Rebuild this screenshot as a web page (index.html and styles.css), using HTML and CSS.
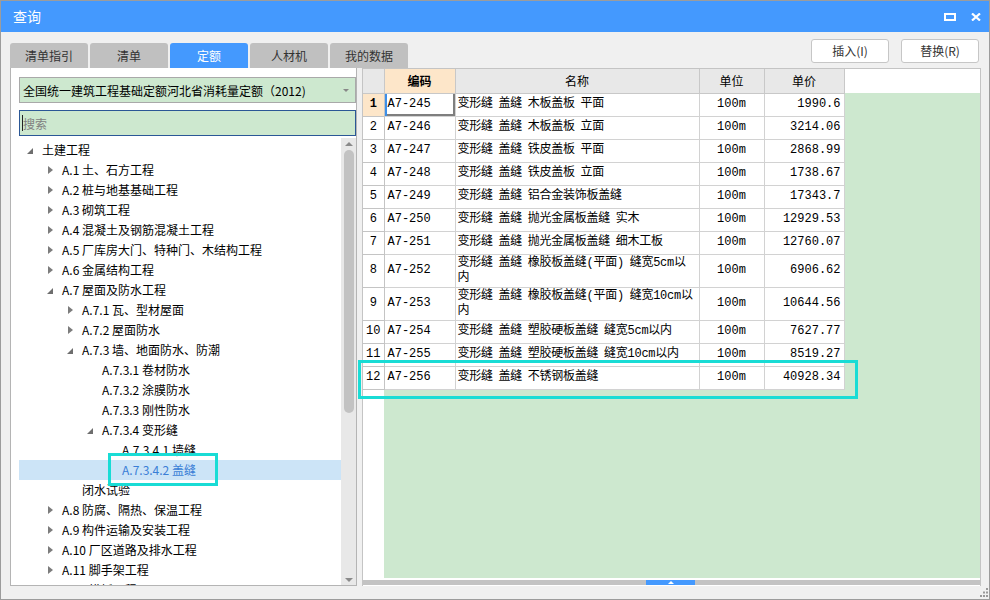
FILE: index.html
```html
<!DOCTYPE html>
<html lang="zh-CN">
<head>
<meta charset="utf-8">
<title>查询</title>
<link rel="stylesheet" href="styles.css">
</head>
<body>
<div class="window">
  <div class="titlebar">
    <span class="title">查询</span>
    <div class="win-ctrls">
      <svg class="ico-max" width="12" height="8" viewBox="0 0 12 8"><rect x="1" y="1" width="10" height="6" fill="none" stroke="#fff" stroke-width="2"/></svg>
      <svg class="ico-close" width="10" height="8" viewBox="0 0 10 8"><path d="M1 0.5 L9 7.5 M9 0.5 L1 7.5" stroke="#fff" stroke-width="2.2"/></svg>
    </div>
  </div>

  <div class="toolbar">
    <div class="tabs">
      <div class="tab">清单指引</div>
      <div class="tab">清单</div>
      <div class="tab active">定额</div>
      <div class="tab">人材机</div>
      <div class="tab">我的数据</div>
    </div>
    <div class="actions">
      <button class="btn">插入(I)</button>
      <button class="btn">替换(R)</button>
    </div>
  </div>

  <div class="main">
    <div class="left-panel">
      <div class="select">
        <span class="select-text">全国统一建筑工程基础定额河北省消耗量定额（2012)</span>
        <span class="select-arrow"></span>
      </div>
      <div class="search"><span class="caret"></span><span class="placeholder">搜索</span></div>
      <div class="tree-wrap">
        <ul class="tree">
          <li class="node l0"><span class="tw open"></span>土建工程</li>
          <li class="node l1"><span class="tw closed"></span>A.1 土、石方工程</li>
          <li class="node l1"><span class="tw closed"></span>A.2 桩与地基基础工程</li>
          <li class="node l1"><span class="tw closed"></span>A.3 砌筑工程</li>
          <li class="node l1"><span class="tw closed"></span>A.4 混凝土及钢筋混凝土工程</li>
          <li class="node l1"><span class="tw closed"></span>A.5 厂库房大门、特种门、木结构工程</li>
          <li class="node l1"><span class="tw closed"></span>A.6 金属结构工程</li>
          <li class="node l1"><span class="tw open"></span>A.7 屋面及防水工程</li>
          <li class="node l2"><span class="tw closed"></span>A.7.1 瓦、型材屋面</li>
          <li class="node l2"><span class="tw closed"></span>A.7.2 屋面防水</li>
          <li class="node l2"><span class="tw open"></span>A.7.3 墙、地面防水、防潮</li>
          <li class="node l3"><span class="tw"></span>A.7.3.1 卷材防水</li>
          <li class="node l3"><span class="tw"></span>A.7.3.2 涂膜防水</li>
          <li class="node l3"><span class="tw"></span>A.7.3.3 刚性防水</li>
          <li class="node l3"><span class="tw open"></span>A.7.3.4 变形缝</li>
          <li class="node l4"><span class="tw"></span>A.7.3.4.1 墙缝</li>
          <li class="node l4 selected"><span class="tw"></span>A.7.3.4.2 盖缝</li>
          <li class="node l2"><span class="tw"></span>闭水试验</li>
          <li class="node l1"><span class="tw closed"></span>A.8 防腐、隔热、保温工程</li>
          <li class="node l1"><span class="tw closed"></span>A.9 构件运输及安装工程</li>
          <li class="node l1"><span class="tw closed"></span>A.10 厂区道路及排水工程</li>
          <li class="node l1"><span class="tw closed"></span>A.11 脚手架工程</li>
          <li class="node l1"><span class="tw closed"></span>A.12 模板工程</li>
        </ul>
        <div class="vscroll">
          <span class="vs-up"></span>
          <div class="vs-thumb"></div>
          <span class="vs-down"></span>
        </div>
      </div>
    </div>

    <div class="grid-panel">
      <div class="grid-area">
        <table class="grid">
          <colgroup>
            <col class="c-rh"><col class="c-code"><col class="c-name"><col class="c-unit"><col class="c-price"><col>
          </colgroup>
          <thead>
            <tr>
              <th class="rh"></th>
              <th class="hcode">编码</th>
              <th>名称</th>
              <th>单位</th>
              <th>单价</th>
              <th class="filler"></th>
            </tr>
          </thead>
          <tbody>
            <tr><td class="rh cur">1</td><td class="code focus">A7-245</td><td class="name">变形缝 盖缝 木板盖板 平面</td><td class="unit">100m</td><td class="price">1990.6</td><td class="filler"></td></tr>
            <tr><td class="rh">2</td><td class="code">A7-246</td><td class="name">变形缝 盖缝 木板盖板 立面</td><td class="unit">100m</td><td class="price">3214.06</td><td class="filler"></td></tr>
            <tr><td class="rh">3</td><td class="code">A7-247</td><td class="name">变形缝 盖缝 铁皮盖板 平面</td><td class="unit">100m</td><td class="price">2868.99</td><td class="filler"></td></tr>
            <tr><td class="rh">4</td><td class="code">A7-248</td><td class="name">变形缝 盖缝 铁皮盖板 立面</td><td class="unit">100m</td><td class="price">1738.67</td><td class="filler"></td></tr>
            <tr><td class="rh">5</td><td class="code">A7-249</td><td class="name">变形缝 盖缝 铝合金装饰板盖缝</td><td class="unit">100m</td><td class="price">17343.7</td><td class="filler"></td></tr>
            <tr><td class="rh">6</td><td class="code">A7-250</td><td class="name">变形缝 盖缝 抛光金属板盖缝 实木</td><td class="unit">100m</td><td class="price">12929.53</td><td class="filler"></td></tr>
            <tr><td class="rh">7</td><td class="code">A7-251</td><td class="name">变形缝 盖缝 抛光金属板盖缝 细木工板</td><td class="unit">100m</td><td class="price">12760.07</td><td class="filler"></td></tr>
            <tr class="tall"><td class="rh">8</td><td class="code">A7-252</td><td class="name">变形缝 盖缝 橡胶板盖缝(平面) 缝宽5cm以<br>内</td><td class="unit">100m</td><td class="price">6906.62</td><td class="filler"></td></tr>
            <tr class="tall"><td class="rh">9</td><td class="code">A7-253</td><td class="name">变形缝 盖缝 橡胶板盖缝(平面) 缝宽10cm以<br>内</td><td class="unit">100m</td><td class="price">10644.56</td><td class="filler"></td></tr>
            <tr><td class="rh">10</td><td class="code">A7-254</td><td class="name">变形缝 盖缝 塑胶硬板盖缝 缝宽5cm以内</td><td class="unit">100m</td><td class="price">7627.77</td><td class="filler"></td></tr>
            <tr><td class="rh">11</td><td class="code">A7-255</td><td class="name">变形缝 盖缝 塑胶硬板盖缝 缝宽10cm以内</td><td class="unit">100m</td><td class="price">8519.27</td><td class="filler"></td></tr>
            <tr><td class="rh">12</td><td class="code">A7-256</td><td class="name">变形缝 盖缝 不锈钢板盖缝</td><td class="unit">100m</td><td class="price">40928.34</td><td class="filler"></td></tr>
          </tbody>
        </table>
      </div>
      <div class="hscroll"><div class="h-thumb"><span class="h-arrow"></span></div></div>
    </div>
  </div>

  <div class="statusbar">
    <svg class="grip" width="10" height="10" viewBox="0 0 10 10">
      <rect x="7" y="0" width="2" height="2" fill="#999"/>
      <rect x="4" y="3.5" width="2" height="2" fill="#999"/>
      <rect x="7" y="3.5" width="2" height="2" fill="#999"/>
      <rect x="1" y="7" width="2" height="2" fill="#999"/>
      <rect x="4" y="7" width="2" height="2" fill="#999"/>
      <rect x="7" y="7" width="2" height="2" fill="#999"/>
    </svg>
  </div>

  <div class="mark mark-tree"></div>
  <div class="mark mark-row"></div>
</div>
</body>
</html>
```

FILE: styles.css
```css
* { box-sizing: border-box; }

html, body {
  margin: 0;
  padding: 0;
  background: #f0f0f0;
}

body {
  font-family: "Noto Sans CJK SC", "Microsoft YaHei", sans-serif;
  font-size: 12px;
  color: #000;
}

.window {
  position: relative;
  width: 990px;
  height: 600px;
  border: 1px solid #9c9c9c;
  background: #f0f0f0;
  display: flex;
  flex-direction: column;
  overflow: hidden;
}

/* title bar */
.titlebar {
  height: 31px;
  flex: none;
  background: #4499fe;
  display: flex;
  align-items: center;
  padding: 0 8px 0 12px;
}

.title {
  color: #fff;
  font-size: 14px;
  line-height: 31px;
}

.win-ctrls {
  margin-left: auto;
  display: flex;
  align-items: center;
  gap: 15px;
  padding-top: 1px;
}

.win-ctrls svg { display: block; }

/* toolbar */
.toolbar {
  height: 36px;
  flex: none;
  display: flex;
  align-items: flex-start;
  padding: 7px 10px 0 9px;
}

.tabs {
  display: flex;
  gap: 2px;
  align-self: flex-end;
}

.tab {
  width: 78px;
  height: 25px;
  background: #c0c0c0;
  color: #333;
  border-radius: 3px 3px 0 0;
  text-align: center;
  line-height: 25px;
  font-size: 12px;
}

.tab.active {
  background: #4499fe;
  color: #fff;
}

.actions {
  margin-left: auto;
  display: flex;
  gap: 12px;
}

.btn {
  width: 78px;
  height: 24px;
  background: #fff;
  border: 1px solid #c6c6c6;
  border-radius: 3px;
  font-family: "Noto Sans CJK SC", sans-serif;
  font-size: 12px;
  color: #333;
  padding: 0;
  line-height: 22px;
}

/* main */
.main {
  height: 518px;
  flex: none;
  display: flex;
  gap: 5px;
  padding-left: 9px;
}

.left-panel {
  width: 347px;
  height: 518px;
  background: #fff;
  border: 1px solid #b4b4b4;
  border-top: none;
  display: flex;
  flex-direction: column;
}

.select {
  margin: 9px 0 0 8px;
  width: 337px;
  height: 26px;
  flex: none;
  background: #cde8cf;
  border: 1px solid #a9a9a9;
  display: flex;
  align-items: center;
  padding-left: 3px;
}

.select-text {
  font-size: 12px;
  color: #000;
  white-space: nowrap;
}

.select-arrow {
  margin-left: auto;
  margin-right: 6px;
  width: 0;
  height: 0;
  border-left: 3px solid transparent;
  border-right: 3px solid transparent;
  border-top: 3px solid #888;
}

.search {
  margin: 7px 0 0 8px;
  width: 337px;
  height: 26px;
  flex: none;
  background: #cde8cf;
  border: 1px solid #2b5796;
  display: flex;
  align-items: center;
  padding-left: 2px;
}

.caret {
  width: 1px;
  height: 16px;
  background: #222;
}

.placeholder {
  color: #808080;
  font-size: 12px;
}

.tree-wrap {
  margin-top: 2px;
  flex: 1;
  display: flex;
  min-height: 0;
}

.tree {
  list-style: none;
  margin: 0;
  padding: 2px 0 0 8px;
  flex: 1;
  overflow: hidden;
}

.node {
  height: 20px;
  line-height: 20px;
  display: flex;
  align-items: center;
  white-space: nowrap;
  color: #000;
  font-size: 12px;
  padding-left: 7px;
}

.node.l1 { padding-left: 27px; }
.node.l2 { padding-left: 47px; }
.node.l3 { padding-left: 67px; }
.node.l4 { padding-left: 87px; }

.node.selected {
  background: #cce4f7;
  color: #3a7ed6;
}

.tw {
  width: 16px;
  height: 20px;
  flex: none;
  position: relative;
}

.tw.closed::before {
  content: "";
  position: absolute;
  left: 2px;
  top: 6px;
  border-left: 5px solid #7c7c7c;
  border-top: 4px solid transparent;
  border-bottom: 4px solid transparent;
}

.tw.open::before {
  content: "";
  position: absolute;
  left: 1px;
  top: 8px;
  border-bottom: 6px solid #6e6e6e;
  border-left: 6px solid transparent;
}

.vscroll {
  width: 15px;
  flex: none;
  background: #e8e8e8;
  display: flex;
  flex-direction: column;
  align-items: center;
}

.vs-up {
  margin-top: 4px;
  border-left: 4px solid transparent;
  border-right: 4px solid transparent;
  border-bottom: 4px solid #8a8a8a;
}

.vs-thumb {
  margin-top: 4px;
  width: 10px;
  height: 263px;
  background: #c2c2c2;
  border-radius: 5px;
}

.vs-down {
  margin-top: auto;
  margin-bottom: 3px;
  border-left: 4px solid transparent;
  border-right: 4px solid transparent;
  border-top: 4px solid #8a8a8a;
}

/* grid panel */
.grid-panel {
  width: 619px;
  height: 518px;
  background: #fff;
  border: 1px solid #c4c4c4;
  border-bottom: none;
  display: flex;
  flex-direction: column;
}

.grid-area {
  flex: 1;
  background: linear-gradient(to right, #fff 21px, #cde8cf 21px);
  overflow: hidden;
}

.grid {
  width: 100%;
  border-collapse: collapse;
  table-layout: fixed;
  font-family: "Liberation Mono", "Noto Sans CJK SC", monospace;
  font-size: 12px;
  color: #000;
}

.c-rh { width: 21px; }
.c-code { width: 71px; }
.c-name { width: 244px; }
.c-unit { width: 65px; }
.c-price { width: 80px; }

.grid th {
  height: 24px;
  padding: 0;
  background: #e8e8e8;
  border: 1px solid #c8c8c8;
  border-top: none;
  font-family: "Noto Sans CJK SC", sans-serif;
  font-size: 12px;
  font-weight: normal;
  color: #000;
}

.grid th.rh { border-left: none; }

.grid th.hcode {
  background: #fde6c9;
  font-weight: bold;
}

.grid th.filler {
  background: #fff;
  border: none;
}

.grid tbody tr { height: 23px; }
.grid tbody tr.tall { height: 33px; }

.grid td {
  padding: 0 3px;
  background: #fff;
  border: 1px solid #d2d2d2;
  white-space: nowrap;
  overflow: hidden;
  line-height: 15px;
  vertical-align: middle;
}

.grid td.name {
  padding: 0 0 0 2px;
  word-spacing: -1.2px;
  letter-spacing: -0.25px;
}

.grid td.rh {
  padding: 0;
  text-align: center;
  border-left: none;
  border-color: #c4c4c4;
}

.grid td.rh.cur {
  background: #fde6c9;
  font-weight: bold;
}

.grid td.focus {
  box-shadow: inset 2px 0 #3d8fe8, inset -2px -2px #7f7f7f;
}

.grid td.unit { text-align: center; }
.grid td.price { text-align: right; }

.grid td.filler {
  background: transparent;
  border: none;
}

.hscroll {
  height: 5px;
  flex: none;
  margin: 2px 0 1px;
  background: #c3c3c3;
  position: relative;
}

.h-thumb {
  position: absolute;
  left: 283px;
  top: 0;
  width: 49px;
  height: 5px;
  background: #4499fe;
  display: flex;
  justify-content: center;
  align-items: center;
}

.h-arrow {
  border-left: 3px solid transparent;
  border-right: 3px solid transparent;
  border-bottom: 3px solid #fff;
}

/* status */
.statusbar {
  height: 13px;
  flex: none;
  position: relative;
}

.grip {
  position: absolute;
  right: 0;
  bottom: 1px;
}

/* annotation marks */
.mark {
  position: absolute;
  border: 3px solid #19dcd5;
  pointer-events: none;
}

.mark-tree {
  left: 107px;
  top: 452px;
  width: 110px;
  height: 33px;
}

.mark-row {
  left: 357px;
  top: 359px;
  width: 500px;
  height: 39px;
}
```
